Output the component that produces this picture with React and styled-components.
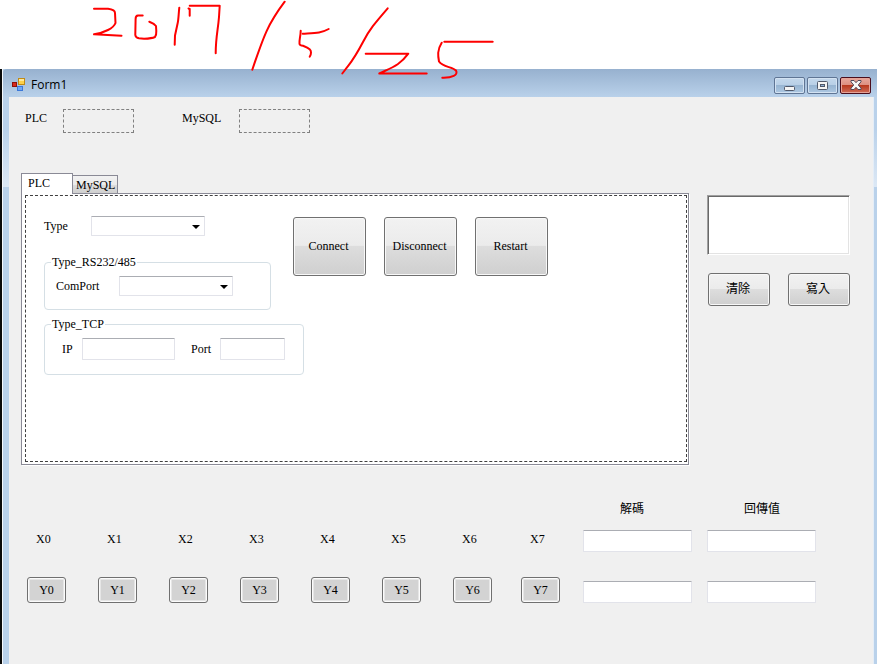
import React from "react";
import styled, { createGlobalStyle } from "styled-components";

const Global = createGlobalStyle`
  *, *::before, *::after { box-sizing: border-box; }
  body { margin: 0; background: #fff; }
  body, button, input, select, textarea {
    font: 12px/16px "Liberation Serif", "Noto Sans CJK TC", serif;
    color: #000;
  }
`;

const Page = styled.div`
  position: relative;
  display: flex;
  flex-direction: column;
  min-height: 100vh;
  padding-top: 69px;
  overflow: hidden;
`;

const Ink = styled.svg`
  position: absolute;
  top: 0;
  left: 0;
  pointer-events: none;
  fill: none;
  stroke: #fe0000;
  stroke-width: 2;
  stroke-linecap: round;
  stroke-linejoin: round;
`;

const Window = styled.main`
  flex: 1;
  display: flex;
  flex-direction: column;
  border-left: 2px solid #0a0a0a;
  padding: 0 4px 0 7px;
  box-shadow: inset 1px 0 #f4f8fc;
  background: linear-gradient(#b9d1ea 60px, #dce8f5 118px, #b9d1ea 118px);
`;

const TitleBar = styled.header`
  display: flex;
  align-items: center;
  gap: 5px;
  height: 28px;
  margin: 0 -4px 0 -6px;
  padding: 4px 6px 0 9px;
  border-top-left-radius: 4px;
  background: linear-gradient(#97b1cf, #b9d1ea);
`;

const Title = styled.h1`
  flex: 1;
  margin: 0;
  font: 12px/16px "Open Sans", "Noto Sans", sans-serif;
`;

const Captions = styled.div`
  display: flex;
  gap: 2px;
`;

const Caption = styled.button`
  display: grid;
  place-items: center;
  width: 31px;
  height: 17px;
  padding: 0;
  border: 1px solid ${(p) => (p.$close ? "#4a0d1c" : "#5f7594")};
  border-radius: 2px;
  box-shadow: inset 0 0 0 1px ${(p) => (p.$close ? "#e5a398" : "#d3e2f2")};
  background: ${(p) =>
    p.$close
      ? "linear-gradient(#e8a79c, #dc8e80 48%, #b8391f 50%, #cf6d59)"
      : "linear-gradient(#c4d8ec, #b8cfe6 48%, #98b5d2 50%, #adc8e2)"};
`;

const Client = styled.div`
  flex: 1;
  padding: 12px 23px 24px 12px;
  background: #f0f0f0;
  box-shadow: 1px 0 #e4edf7;
`;

const StatusBar = styled.div`
  display: flex;
  gap: 48px;
  padding-left: 4px;
`;

const Field = styled.div`
  display: flex;
  align-items: ${(p) => (p.$top ? "flex-start" : "center")};
`;

const Label = styled.label`
  width: ${(p) => p.$w}px;
  line-height: 18px;
`;

const Status = styled.output`
  width: 71px;
  height: 24px;
  border: 1px dashed #808080;
`;

const Main = styled.div`
  display: flex;
  gap: 18px;
  margin-top: 40px;
`;

const TabArea = styled.section`
  flex: 1;
  min-width: 0;
`;

const Tabs = styled.div`
  display: flex;
  align-items: flex-end;
  height: 20px;
`;

const Tab = styled.button`
  border: 1px solid #8a8a96;
  border-bottom: 0;
  text-align: left;
  ${(p) =>
    p.$active
      ? "position: relative; width: 52px; height: 21px; padding: 0 6px 2px; margin-bottom: -1px; background: #fff;"
      : "width: 46px; height: 18px; padding: 0 3px; margin-left: -1px; background: linear-gradient(#f2f2f2, #ebebeb 50%, #dddddd 50%, #cfcfcf);"}
`;

const TabFrame = styled.div`
  padding: 1px 1px 2px 3px;
  border: 1px solid #8a8a96;
  background: #fff;
  box-shadow: 1px 1px #fff;
`;

const TabPanel = styled.div`
  min-height: 267px;
  padding: 20px 18px;
  border: 1px dashed #404040;
`;

const Setup = styled.div`
  display: flex;
`;

const SetupFields = styled.div`
  width: 249px;
`;

const Actions = styled.div`
  display: flex;
  justify-content: flex-end;
  gap: 18px;
  padding-top: 1px;
`;

const PushButton = styled.button`
  width: ${(p) => p.$w}px;
  height: ${(p) => p.$h}px;
  padding: 0 2px 2px 0;
  border: 1px solid #707070;
  border-radius: 3px;
  box-shadow: inset 0 0 0 1px #f8f8f8;
  background: linear-gradient(#f2f2f2, #ebebeb 48%, #dddddd 50%, #cfcfcf);
`;

const IoButton = styled.button`
  width: 39px;
  height: 26px;
  padding: 0;
  border: 1px solid #707070;
  border-radius: 3px;
  box-shadow: inset 0 0 0 1px #fbfbfb, inset 0 0 0 2px #e6e6e6;
  background: #d3d3d3;
`;

const inputEdge = `
  border: 1px solid #e2e3ea;
  border-top-color: #abadb3;
  border-radius: 1px;
  background: #fff;
`;

const TextBox = styled.input`
  width: ${(p) => p.$w}px;
  height: 22px;
  padding: 0 3px;
  ${inputEdge}
`;

const SelectBox = styled.div`
  position: relative;
  width: 114px;
  height: 20px;
`;

const Select = styled.select`
  display: block;
  width: 100%;
  height: 100%;
  padding: 0 16px 0 3px;
  appearance: none;
  ${inputEdge}
`;

const Caret = styled.svg`
  position: absolute;
  right: 5px;
  top: 9px;
  pointer-events: none;
`;

const Group = styled.fieldset`
  width: ${(p) => p.$w}px;
  margin: ${(p) => p.$gap}px 0 0;
  padding: 6px 6px ${(p) => p.$bottom}px;
  border: 1px solid #d5dfe5;
  border-radius: 4px;
`;

const Legend = styled.legend`
  padding: 0 1px;
  line-height: 16px;
`;

const GroupRow = styled.div`
  display: flex;
  gap: 16px;
  padding-left: ${(p) => p.$indent}px;
`;

const Side = styled.aside`
  width: 143px;
  padding-top: 22px;
`;

const Log = styled.textarea`
  display: block;
  width: 100%;
  height: 60px;
  margin-bottom: 17px;
  padding: 3px;
  resize: none;
  border: 1px solid;
  border-color: #a0a0a0 #fff #fff #a0a0a0;
  box-shadow: inset 1px 1px #696969, inset -1px -1px #e3e3e3;
  background: #fff;
`;

const Bottom = styled.div`
  display: flex;
  align-items: flex-end;
  gap: 23px;
  margin-top: 36px;
  padding-left: 6px;
`;

const IoGrid = styled.div`
  display: grid;
  grid-template-columns: repeat(6, 71px) 68px 39px;
  row-gap: 30px;
`;

const IoLabel = styled.span`
  padding-left: 9px;
`;

const DataGrid = styled.div`
  display: grid;
  grid-template-columns: 109px 109px;
  column-gap: 15px;
  row-gap: 29px;
`;

const DataHead = styled.div`
  padding-left: 37px;
  margin-bottom: -16px;
`;

const ports = [0, 1, 2, 3, 4, 5, 6, 7];

function Combo({ id }) {
  return (
    <SelectBox>
      <Select id={id} defaultValue="">
        <option value="" />
      </Select>
      <Caret width="8" height="4" viewBox="0 0 8 4" aria-hidden="true">
        <path d="M0 0h8L4 4z" />
      </Caret>
    </SelectBox>
  );
}

function FormIcon() {
  return (
    <svg width="14" height="14" viewBox="0 0 14 14" aria-hidden="true">
      <rect x="6.5" y="0.5" width="6" height="6" fill="#fcd04a" stroke="#c08a16" />
      <rect x="7" y="1" width="5" height="2" fill="#ffe99a" />
      <rect x="0.5" y="4.5" width="4" height="4" fill="#d8291c" stroke="#8e1009" />
      <rect x="5.5" y="8.5" width="5" height="4" fill="#6fa8f5" stroke="#3c78d8" />
    </svg>
  );
}

export default function App() {
  return (
    <Page>
      <Global />
      <Window>
        <TitleBar>
          <FormIcon />
          <Title>Form1</Title>
          <Captions>
            <Caption aria-label="Minimize">
              <svg width="11" height="13" viewBox="0 0 11 13">
                <rect x="0.5" y="7.5" width="10" height="4" rx="1" fill="#f4f4f4" stroke="#50586a" />
              </svg>
            </Caption>
            <Caption aria-label="Maximize">
              <svg width="11" height="9" viewBox="0 0 11 9">
                <rect x="0.5" y="0.5" width="10" height="8" rx="1" fill="#f4f4f4" stroke="#50586a" />
                <rect x="3.5" y="3.5" width="4" height="2" fill="#8fb0d4" stroke="#50586a" />
              </svg>
            </Caption>
            <Caption $close aria-label="Close">
              <svg width="12" height="10" viewBox="0 0 12 10">
                <path
                  d="M1 .5h3L6 2.7 8 .5h3v1.3L8.3 5 11 8.2v1.3H8L6 7.3 4 9.5H1V8.2L3.7 5 1 1.8z"
                  fill="#f6f6f6"
                  stroke="#50485a"
                />
              </svg>
            </Caption>
          </Captions>
        </TitleBar>

        <Client>
          <StatusBar>
            <Field $top>
              <Label $w={38} htmlFor="plc-status">PLC</Label>
              <Status id="plc-status" />
            </Field>
            <Field $top>
              <Label $w={57} htmlFor="mysql-status">MySQL</Label>
              <Status id="mysql-status" />
            </Field>
          </StatusBar>

          <Main>
            <TabArea>
              <Tabs role="tablist">
                <Tab $active role="tab" aria-selected="true">PLC</Tab>
                <Tab role="tab" aria-selected="false">MySQL</Tab>
              </Tabs>
              <TabFrame>
                <TabPanel role="tabpanel">
                  <Setup>
                    <SetupFields>
                      <Field>
                        <Label $w={47} htmlFor="type">Type</Label>
                        <Combo id="type" />
                      </Field>
                      <Group $w={227} $gap={18} $bottom={13}>
                        <Legend>Type_RS232/485</Legend>
                        <GroupRow $indent={5}>
                          <Field>
                            <Label $w={63} htmlFor="com-port">ComPort</Label>
                            <Combo id="com-port" />
                          </Field>
                        </GroupRow>
                      </Group>
                    </SetupFields>
                    <Actions>
                      <PushButton $w={73} $h={59}>Connect</PushButton>
                      <PushButton $w={73} $h={59}>Disconnect</PushButton>
                      <PushButton $w={73} $h={59}>Restart</PushButton>
                    </Actions>
                  </Setup>
                  <Group $w={260} $gap={6} $bottom={14}>
                    <Legend>Type_TCP</Legend>
                    <GroupRow $indent={11}>
                      <Field>
                        <Label $w={20} htmlFor="ip">IP</Label>
                        <TextBox $w={93} id="ip" />
                      </Field>
                      <Field>
                        <Label $w={29} htmlFor="port">Port</Label>
                        <TextBox $w={65} id="port" />
                      </Field>
                    </GroupRow>
                  </Group>
                </TabPanel>
              </TabFrame>
            </TabArea>

            <Side>
              <Log aria-label="Log" />
              <Actions>
                <PushButton $w={62} $h={33}>清除</PushButton>
                <PushButton $w={62} $h={33}>寫入</PushButton>
              </Actions>
            </Side>
          </Main>

          <Bottom>
            <IoGrid>
              {ports.map((n) => (
                <IoLabel key={n}>X{n}</IoLabel>
              ))}
              {ports.map((n) => (
                <IoButton key={n}>Y{n}</IoButton>
              ))}
            </IoGrid>
            <DataGrid>
              <DataHead id="decode">解碼</DataHead>
              <DataHead id="returned">回傳值</DataHead>
              <TextBox $w={109} aria-labelledby="decode" />
              <TextBox $w={109} aria-labelledby="returned" />
              <TextBox $w={109} aria-labelledby="decode" />
              <TextBox $w={109} aria-labelledby="returned" />
            </DataGrid>
          </Bottom>
        </Client>
      </Window>

      <Ink width="500" height="82" viewBox="0 0 500 82" aria-hidden="true">
        <path d="M94 8.7H108Q115 9.5 115 13L115.5 23Q114 27 108 30 101 33.5 94 34.3L121.5 35.7" />
        <path d="M142.7 15.5H138Q135.6 15.6 135.6 19L135.3 35Q135.5 37.8 139 38.3L144 38.8Q152 38.5 155 37 156.5 35 156.3 31L156 26Q154 23.5 149.3 21.7" />
        <path d="M179.3 7.7C178.6 14 178.5 20 177.7 23L175 35.5 174.7 44.7" />
        <path d="M188.5 8.5l1.2.5v6.7M189.7 5.7H219.7L219 17C218 30 215.7 37 215.7 53.3" />
        <path d="M284.7 1.7C268 24 264 35 252.3 69.7" />
        <path d="M300.7 30.7C300.7 36 299 40 299.5 44 300 45.5 301 45.7 303 45.8 310 48.5 311 50 311 52.5Q311 54.8 309.7 56.7" />
        <path d="M302.7 33.7C315 33 321 33.3 328.7 29" />
        <path d="M387.7 8.3C375 23 369 30 363 42 353 61 351 62 345 70L342.3 73.5" />
        <path d="M365.7 53.7H408.3C400 65 393 67 379.3 73.5H426.7" />
        <path d="M444.3 41.7H492.7M441.7 42.7C437 50 438 56 439 61.5 443 67.5 452 66.5 456 70.5 458.5 75 452 78 442.3 77.7" />
      </Ink>
    </Page>
  );
}
